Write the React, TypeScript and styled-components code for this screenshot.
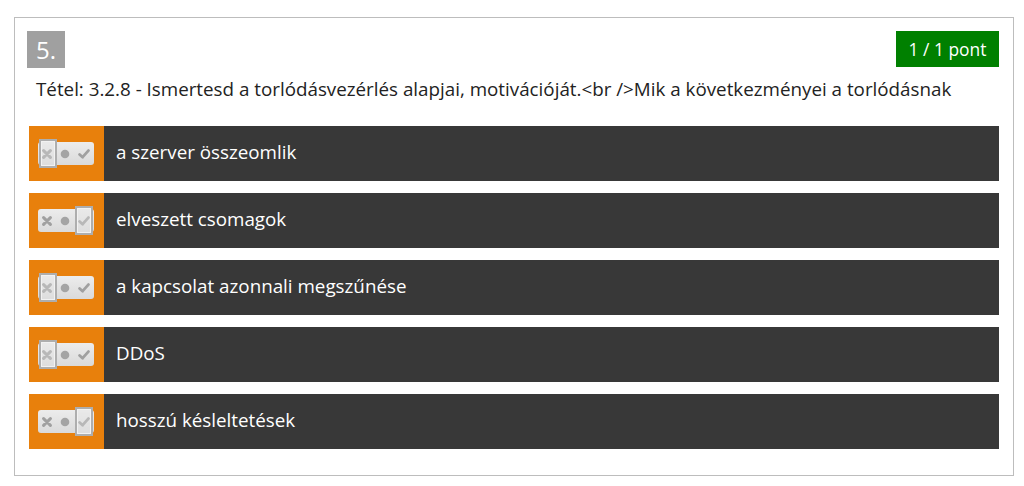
import React from "react";
import styled, { createGlobalStyle } from "styled-components";

const Global = createGlobalStyle`
  html, body { margin: 0; padding: 0; background: #fff; }
  body { font-family: "Open Sans", "Liberation Sans", sans-serif; }
  * { box-sizing: border-box; }
`;

const Card = styled.div`
  margin: 17px 0 0 14px;
  width: 1000px;
  height: 459px;
  border: 1px solid #bdbdbd;
  padding: 13px 14px 0 14px;
  display: flex;
  flex-direction: column;
`;

const Header = styled.div`
  display: flex;
  justify-content: space-between;
  align-items: flex-start;
  height: 37px;
`;

const Num = styled.div`
  margin-left: -2px;
  width: 38px;
  height: 37px;
  background: #a0a0a0;
  color: #fff;
  font-size: 24px;
  line-height: 37px;
  padding-left: 9px;
`;

const Score = styled.div`
  width: 103px;
  height: 36px;
  background: #008000;
  color: #fff;
  font-size: 17.4px;
  line-height: 36px;
  text-align: center;
`;

const Title = styled.div`
  margin: 8px 0 0 7px;
  font-size: 18.8px;
  line-height: 26px;
  color: #222;
  height: 26px;
  white-space: nowrap;
`;

const List = styled.div`
  margin-top: 24px;
  display: flex;
  flex-direction: column;
  gap: 12px;
`;

const Row = styled.div`
  display: flex;
  height: 55px;
  background: #383838;
`;

const Side = styled.div`
  width: 75px;
  background: #e8800c;
  display: flex;
  align-items: center;
  justify-content: center;
  padding-right: 2px;
`;

const Text = styled.div`
  flex: 1;
  color: #fff;
  font-size: 18.8px;
  padding-left: 12px;
  display: flex;
  align-items: center;
  padding-bottom: 3px;
`;

const Track = styled.div`
  position: relative;
  width: 56px;
  height: 23px;
  border-radius: 3px;
  background: linear-gradient(#ececec, #dadada);
  display: flex;
  align-items: center;
  justify-content: space-around;
`;

const Cell = styled.div`
  width: 18px;
  display: flex;
  justify-content: center;
  align-items: center;
`;

const Sel = styled.div<{ $side: "left" | "right" }>`
  position: absolute;
  top: -3px;
  ${(p) => (p.$side === "left" ? "left: 1px;" : "right: 1px;")}
  width: 18px;
  height: 29px;
  border: 2px solid #aeaeae;
  box-shadow: inset 0 0 0 1px #f2f2f2;
  background: rgba(230,230,230,0.35);
`;

const Toggle = ({ sel }: { sel: "left" | "right" }) => (
  <Track>
    <Cell>
      <svg width="10" height="10" viewBox="0 0 10 10">
        <path d="M1.6 1.6 L8.4 8.4 M8.4 1.6 L1.6 8.4" stroke="#a0a0a0" strokeWidth="3" strokeLinecap="round" />
      </svg>
    </Cell>
    <Cell>
      <svg width="10" height="10" viewBox="0 0 10 10">
        <circle cx="5" cy="5" r="4.3" fill="#a4a4a4" />
      </svg>
    </Cell>
    <Cell>
      <svg width="12" height="10" viewBox="0 0 12 10">
        <path d="M1.6 5.4 L4.6 8.2 L10.4 1.6" stroke="#a0a0a0" strokeWidth="2.8" fill="none" strokeLinecap="round" strokeLinejoin="round" />
      </svg>
    </Cell>
    <Sel $side={sel} />
  </Track>
);

const answers: { text: string; sel: "left" | "right" }[] = [
  { text: "a szerver összeomlik", sel: "left" },
  { text: "elveszett csomagok", sel: "right" },
  { text: "a kapcsolat azonnali megszűnése", sel: "left" },
  { text: "DDoS", sel: "left" },
  { text: "hosszú késleltetések", sel: "right" },
];

export default function App() {
  return (
    <>
      <Global />
      <Card>
        <Header>
          <Num>5.</Num>
          <Score>1 / 1 pont</Score>
        </Header>
        <Title>
          Tétel: 3.2.8 - Ismertesd a torlódásvezérlés alapjai, motivációját.&lt;br /&gt;Mik a következményei a torlódásnak
        </Title>
        <List>
          {answers.map((a) => (
            <Row key={a.text}>
              <Side>
                <Toggle sel={a.sel} />
              </Side>
              <Text>{a.text}</Text>
            </Row>
          ))}
        </List>
      </Card>
    </>
  );
}
